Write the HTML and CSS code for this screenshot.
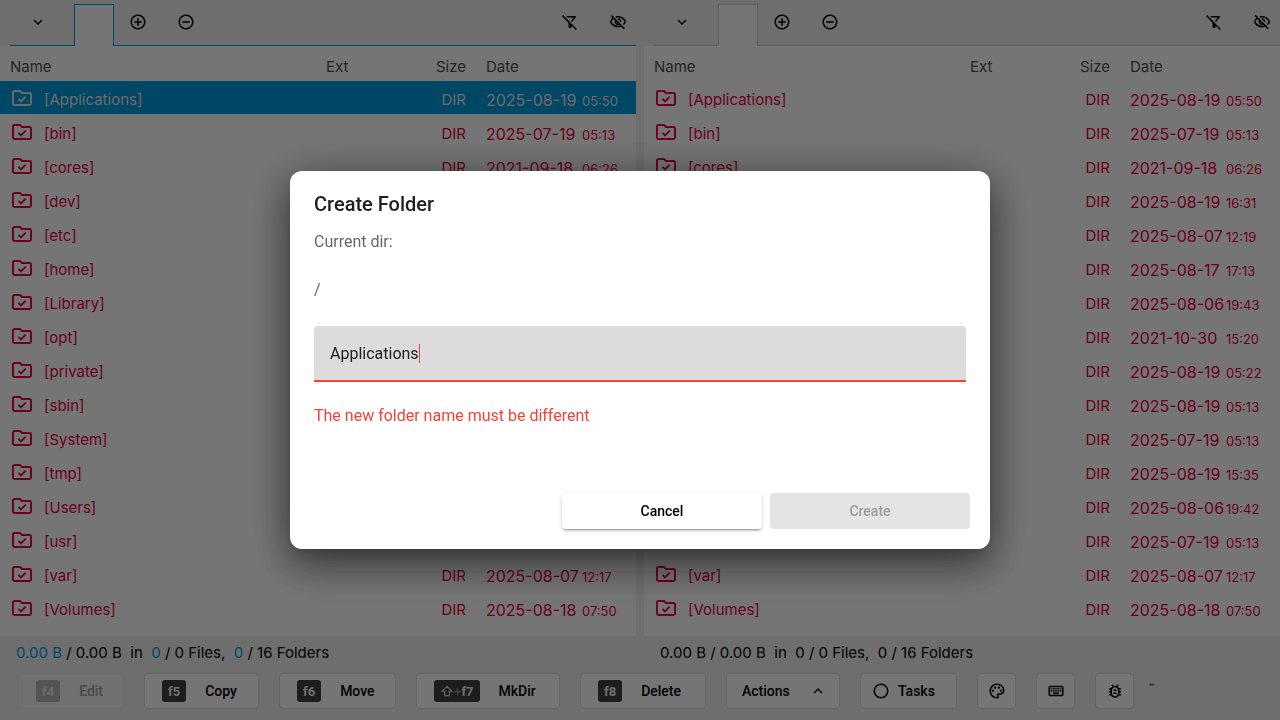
FILE: index.html
```html
<!DOCTYPE html>
<html lang="en">
<head>
<meta charset="utf-8">
<title>File Commander</title>
<link rel="stylesheet" href="styles.css">
</head>
<body>
<svg class="sprite" aria-hidden="true">
  <symbol id="i-down" viewBox="0 0 24 24"><path d="M7.41 8.59 12 13.17l4.59-4.58L18 10l-6 6-6-6z"/></symbol>
  <symbol id="i-up" viewBox="0 0 24 24"><path d="M7.41 15.41 12 10.83l4.59 4.58L18 14l-6-6-6 6z"/></symbol>
  <symbol id="i-plus" viewBox="0 0 24 24"><path d="M13 7h-2v4H7v2h4v4h2v-4h4v-2h-4V7zm-1-5C6.48 2 2 6.48 2 12s4.48 10 10 10 10-4.48 10-10S17.520 2 12 2zm0 18c-4.410 0-8-3.590-8-8s3.590-8 8-8 8 3.590 8 8-3.590 8-8 8z"/></symbol>
  <symbol id="i-minus" viewBox="0 0 24 24"><path d="M7 11v2h10v-2H7zm5-9C6.480 2 2 6.480 2 12s4.480 10 10 10 10-4.480 10-10S17.520 2 12 2zm0 18c-4.410 0-8-3.590-8-8s3.590-8 8-8 8 3.590 8 8-3.590 8-8 8z"/></symbol>
  <symbol id="i-filter" viewBox="0 0 24 24"><path d="m16.950 6-3.570 4.550 1.430 1.430c1.030-1.310 4.980-6.370 4.980-6.370A.998.998 0 0 0 19 4H6.830l2 2h8.120zM2.810 2.810 1.390 4.220 10 13v6c0 .55.450 1 1 1h2c.55 0 1-.45 1-1v-2.170l5.780 5.780 1.410-1.410L2.810 2.810z"/></symbol>
  <symbol id="i-eye" viewBox="0 0 24 24"><path d="M12 6c3.790 0 7.170 2.130 8.820 5.500-.59 1.220-1.420 2.270-2.410 3.120l1.410 1.410c1.390-1.230 2.490-2.770 3.180-4.530C21.270 7.110 17 4 12 4c-1.270 0-2.490.2-3.640.57l1.650 1.650C10.660 6.090 11.320 6 12 6zm-1.070 1.140L13 9.210c.57.25 1.030.71 1.280 1.280l2.070 2.070c.08-.34.14-.7.14-1.070C16.500 9.010 14.480 7 12 7c-.37 0-.72.05-1.070.14zM2.010 3.870l2.680 2.680A11.738 11.738 0 0 0 1 11.500C2.730 15.890 7 19 12 19c1.520 0 2.980-.29 4.320-.82l3.420 3.420 1.410-1.410L3.420 2.450 2.010 3.870zm7.500 7.500 2.610 2.610c-.04.01-.08.02-.12.02a2.500 2.500 0 0 1-2.500-2.500c0-.05.010-.08.010-.13zm-3.400-3.400 1.750 1.750a4.600 4.600 0 0 0-.36 1.780 4.507 4.507 0 0 0 6.270 4.140l.98.98c-.88.24-1.800.38-2.750.38-3.790 0-7.170-2.130-8.820-5.500.7-1.430 1.720-2.610 2.930-3.530z"/></symbol>
  <symbol id="i-folder" viewBox="0 0 24 24"><path d="M3 6.500V17.500A1.500 1.500 0 0 0 4.500 19H19.500A1.500 1.500 0 0 0 21 17.500V8.500A1.500 1.500 0 0 0 19.500 7H12L10 5H4.500A1.500 1.500 0 0 0 3 6.500ZM8.500 12.800l2.500 2.500 4.700-4.700" fill="none" stroke="currentColor" stroke-width="1.900"/></symbol>
  <symbol id="i-shift" viewBox="0 0 24 24"><path d="M12 4 3.500 12.500H8V20h8v-7.500h4.500z" fill="none" stroke="currentColor" stroke-width="2"/></symbol>
  <symbol id="i-circle" viewBox="0 0 24 24"><circle cx="12" cy="12" r="9" fill="none" stroke="currentColor" stroke-width="2"/></symbol>
  <symbol id="i-palette" viewBox="0 0 24 24"><path d="M12 22C6.490 22 2 17.510 2 12S6.490 2 12 2s10 4.040 10 9c0 3.310-2.690 6-6 6h-1.770c-.28 0-.5.22-.5.500 0 .12.050.23.130.33.41.47.640 1.060.640 1.670A2.500 2.500 0 0 1 12 22zm0-18c-4.410 0-8 3.590-8 8s3.590 8 8 8c.28 0 .5-.22.500-.5a.54.540 0 0 0-.14-.35c-.41-.46-.63-1.050-.63-1.650a2.500 2.500 0 0 1 2.500-2.500H16c2.210 0 4-1.790 4-4 0-3.860-3.590-7-8-7z"/><circle cx="6.500" cy="11.500" r="1.500"/><circle cx="9.500" cy="7.500" r="1.500"/><circle cx="14.500" cy="7.500" r="1.500"/><circle cx="17.500" cy="11.500" r="1.500"/></symbol>
  <symbol id="i-keyboard" viewBox="0 0 24 24"><path d="M4 5h16a2 2 0 0 1 2 2v10a2 2 0 0 1-2 2H4a2 2 0 0 1-2-2V7a2 2 0 0 1 2-2zm0 2v10h16V7zm7 1h2v2h-2zm0 3h2v2h-2zM8 8h2v2H8zm0 3h2v2H8zm-3 0h2v2H5zm0-3h2v2H5zm3 6h8v2H8zm6-3h2v2h-2zm0-3h2v2h-2zm3 3h2v2h-2zm0-3h2v2h-2z" fill-rule="evenodd"/></symbol>
  <symbol id="i-bug" viewBox="0 0 24 24"><path d="M20 8h-2.810a5.985 5.985 0 0 0-1.820-1.960L17 4.410 15.590 3l-2.170 2.170a6.002 6.002 0 0 0-2.830 0L8.410 3 7 4.410l1.620 1.630C7.880 6.550 7.260 7.220 6.810 8H4v2h2.090c-.05.33-.09.66-.09 1v1H4v2h2v1c0 .34.040.67.090 1H4v2h2.810c1.040 1.790 2.970 3 5.190 3s4.150-1.210 5.190-3H20v-2h-2.090c.05-.33.090-.66.090-1v-1h2v-2h-2v-1c0-.34-.04-.67-.09-1H20V8zm-4 7c0 2.210-1.790 4-4 4s-4-1.790-4-4v-4c0-2.210 1.790-4 4-4s4 1.790 4 4v4zm-6-1h4v2h-4zm0-4h4v2h-4z"/></symbol>
</svg>

<div class="app">
  <main class="panels">
    <section class="panel panel-active" aria-label="Left panel">
      <div class="toolbar">
        <div class="tool-lead"><button class="tool" aria-label="Volumes"><svg class="icon"><use href="#i-down"/></svg></button></div>
        <button class="tab" aria-label="Current tab"></button>
        <div class="tool-rest">
          <button class="tool" aria-label="Add tab"><svg class="icon"><use href="#i-plus"/></svg></button>
          <button class="tool" aria-label="Remove tab"><svg class="icon"><use href="#i-minus"/></svg></button>
          <span class="spacer"></span>
          <button class="tool" aria-label="Clear filter"><svg class="icon"><use href="#i-filter"/></svg></button>
          <button class="tool" aria-label="Hidden files"><svg class="icon"><use href="#i-eye"/></svg></button>
        </div>
      </div>
      <div class="list">
        <table class="files">
          <thead><tr><th class="c-name">Name</th><th class="c-ext">Ext</th><th class="c-size">Size</th><th class="c-date">Date</th></tr></thead>
          <tbody></tbody>
        </table>
      </div>
      <p class="status"><span class="mark">0.00 B</span> / 0.00 B&nbsp; in&nbsp; <span class="mark">0</span> / 0 Files,&nbsp; <span class="mark">0</span> / 16 Folders</p>
    </section>
    <section class="panel" aria-label="Right panel">
      <div class="toolbar">
        <div class="tool-lead"><button class="tool" aria-label="Volumes"><svg class="icon"><use href="#i-down"/></svg></button></div>
        <button class="tab" aria-label="Current tab"></button>
        <div class="tool-rest">
          <button class="tool" aria-label="Add tab"><svg class="icon"><use href="#i-plus"/></svg></button>
          <button class="tool" aria-label="Remove tab"><svg class="icon"><use href="#i-minus"/></svg></button>
          <span class="spacer"></span>
          <button class="tool" aria-label="Clear filter"><svg class="icon"><use href="#i-filter"/></svg></button>
          <button class="tool" aria-label="Hidden files"><svg class="icon"><use href="#i-eye"/></svg></button>
        </div>
      </div>
      <div class="list">
        <table class="files">
          <thead><tr><th class="c-name">Name</th><th class="c-ext">Ext</th><th class="c-size">Size</th><th class="c-date">Date</th></tr></thead>
          <tbody></tbody>
        </table>
      </div>
      <p class="status"><span class="mark">0.00 B</span> / 0.00 B&nbsp; in&nbsp; <span class="mark">0</span> / 0 Files,&nbsp; <span class="mark">0</span> / 16 Folders</p>
    </section>
  </main>
  <footer class="actions">
    <button class="btn w-edit" disabled><kbd>f4</kbd>Edit</button>
    <button class="btn w-copy"><kbd>f5</kbd>Copy</button>
    <button class="btn w-move"><kbd>f6</kbd>Move</button>
    <button class="btn w-mkdir"><kbd><svg class="shift"><use href="#i-shift"/></svg><span class="plus">+</span>f7</kbd>MkDir</button>
    <button class="btn w-delete"><kbd>f8</kbd>Delete</button>
    <button class="btn btn-menu w-actions">Actions<svg class="icon"><use href="#i-up"/></svg></button>
    <button class="btn btn-tasks w-tasks"><svg class="icon"><use href="#i-circle"/></svg>Tasks</button>
    <button class="btn btn-icon" aria-label="Theme"><svg class="icon"><use href="#i-palette"/></svg></button>
    <button class="btn btn-icon" aria-label="Shortcuts"><svg class="icon"><use href="#i-keyboard"/></svg></button>
    <div class="about">
      <button class="btn btn-icon" aria-label="Report a bug"><svg class="icon"><use href="#i-bug"/></svg></button>
      <a class="version" href="#">-</a>
    </div>
  </footer>
</div>

<div class="scrim">
  <form class="dialog" role="dialog" aria-modal="true" aria-labelledby="dialog-title">
    <h2 class="dialog-title" id="dialog-title">Create Folder</h2>
    <div class="dialog-body">
      <label class="dialog-label" for="folder">Current dir:</label>
      <p class="dialog-path">/</p>
      <div class="field"><input class="field-input" id="folder" type="text" value="Applications" aria-invalid="true" aria-describedby="folder-error"><span class="caret"></span></div>
      <p class="error" id="folder-error">The new folder name must be different</p>
    </div>
    <div class="dialog-actions">
      <button class="dialog-btn" type="button">Cancel</button>
      <button class="dialog-btn" type="submit" disabled>Create</button>
    </div>
  </form>
</div>
<script src="app.js"></script>
</body>
</html>
```
FILE: styles.css
```css
* { box-sizing: border-box; }

body {
  margin: 0;
  font-family: Inter, "Liberation Sans", sans-serif;
  font-size: 15px;
  color: #000;
  background: #f0f0f0;
}

button { font: inherit; color: inherit; margin: 0; }
svg { fill: currentColor; flex: none; }
.sprite { position: absolute; width: 0; height: 0; }
.icon { width: 18px; height: 18px; display: block; }

.app { display: flex; flex-direction: column; min-height: 100vh; }
.panels { flex: 1; display: grid; grid-template-columns: 1fr 1fr; gap: 8px; }
.panel { --line: #d0d0d0; display: flex; flex-direction: column; min-width: 0; }
.panel-active { --line: #00a0e8; }

.toolbar { display: flex; height: 46px; padding: 4px 0 0 10px; }
.tool-lead, .tool-rest { display: flex; align-items: center; border-bottom: 1px solid var(--line); padding-bottom: 5px; }
.tool-lead { width: 64px; padding-left: 10px; }
.tool-rest { flex: 1; gap: 12px; padding-left: 6px; }
.spacer { flex: 1; }
.tool { width: 36px; height: 36px; padding: 0; border: 0; background: none; display: flex; align-items: center; justify-content: center; }
.tab { width: 40px; padding: 0; border: 1px solid var(--line); border-bottom: 0; background: #fff; }

.list { flex: 1; background: #fff; }
.files { width: 100%; table-layout: fixed; border-collapse: separate; border-spacing: 0; }
.files th { height: 35px; padding: 5px 10px 0; font-weight: 400; text-align: left; color: #505050; }
.files td { height: 34px; padding: 4px 10px 0; color: #e80040; white-space: nowrap; border-bottom: 1px solid #fff; }
.files .c-ext { width: 70px; }
.files .c-size { width: 90px; text-align: right; }
.files .c-date { width: 160px; }
.files tr.selected td { background: #0098dc; color: #e8e8e8; }
.entry { display: flex; align-items: center; gap: 10px; }
.folder { width: 24px; height: 24px; margin-bottom: 4px; }
.stamp { display: flex; align-items: baseline; }
.day { width: 96px; font-size: 16px; }
.time { font-size: 13px; }

.status { margin: 0; padding: 0 16px; line-height: 34px; white-space: pre-wrap; }
.panel-active .mark { color: #00a0e8; }

.actions { display: flex; align-items: flex-start; gap: 20px; padding: 3px 18px 11px; font-family: Roboto, sans-serif; font-size: 14px; font-weight: 500; }
.btn { display: flex; align-items: center; gap: 19px; height: 36px; padding: 0 17px; border: 1px solid #dcdcdc; border-radius: 4px; background: #fff; white-space: nowrap; }
.btn:disabled { color: #a0a0a0; background: #f4f4f4; border-color: #e8e8e8; }
.btn kbd { display: flex; align-items: center; height: 22px; padding: 0 6px; border-radius: 3px; background: #404040; color: #f0f0f0; font: 700 13px Roboto, sans-serif; }
.btn:disabled kbd { background: #b8b8b8; color: #e8e8e8; }
.shift { width: 14px; height: 14px; color: #d0d0d0; }
.plus { font-weight: 400; color: #909090; }
.w-edit { width: 106px; }
.w-copy { width: 115px; }
.w-move { width: 117px; }
.w-mkdir { width: 144px; }
.w-delete { width: 126px; }
.w-actions { width: 114px; }
.w-tasks { width: 97px; }
.btn-menu { padding: 0 15px; justify-content: space-between; }
.btn-tasks { padding: 0 11px; gap: 8px; }
.btn-icon { width: 39px; padding: 0; justify-content: center; }
.about { display: flex; gap: 15px; }
.version { font: 16px/22px "Liberation Serif", serif; text-decoration: none; color: #0000ee; }

.scrim { position: fixed; inset: 0; display: flex; align-items: center; justify-content: center; background: rgba(0, 0, 0, .54); }
.dialog {
  width: 700px; max-width: 100%; border-radius: 12px; background: #fff; color: #666;
  font: 16px/24px Roboto, sans-serif;
  box-shadow: 0 11px 15px -7px rgba(0, 0, 0, .2), 0 24px 38px 3px rgba(0, 0, 0, .14), 0 9px 46px 8px rgba(0, 0, 0, .12), 0 8px 40px rgba(0, 0, 0, .4);
}
.dialog-title { margin: 0; padding: 17px 24px 10px; font-size: 20px; line-height: 32px; font-weight: 500; color: #202020; }
.dialog-body { padding: 0 24px; }
.dialog-label { display: block; }
.dialog-path { margin: 24px 0; }
.field { position: relative; }
.field-input { display: block; width: 100%; height: 56px; padding: 0 16px; border: 0; border-bottom: 2px solid #f44336; border-radius: 4px 4px 0 0; background: #dcdcdc; color: #202020; font: inherit; outline: 0; caret-color: #f44336; }
.caret { position: absolute; left: 105px; top: 18px; width: 1px; height: 19px; background: #f44336; }
.error { margin: 22px 0 0; color: #f44336; }
.dialog-actions { display: flex; justify-content: flex-end; gap: 8px; padding: 65px 20px 20px; }
.dialog-btn { width: 200px; height: 36px; border: 0; border-radius: 4px; background: #fff; color: #000; font-size: 14px; font-weight: 500; box-shadow: 0 3px 1px -2px rgba(0, 0, 0, .2), 0 2px 2px rgba(0, 0, 0, .14), 0 1px 5px rgba(0, 0, 0, .12); }
.dialog-btn:disabled { background: #e4e4e4; color: #9c9c9c; box-shadow: none; }
```
FILE: app.js
```js
const entries = [
  ["Applications", "2025-08-19", "05:50"],
  ["bin", "2025-07-19", "05:13"],
  ["cores", "2021-09-18", "06:26"],
  ["dev", "2025-08-19", "16:31"],
  ["etc", "2025-08-07", "12:19"],
  ["home", "2025-08-17", "17:13"],
  ["Library", "2025-08-06", "19:43"],
  ["opt", "2021-10-30", "15:20"],
  ["private", "2025-08-19", "05:22"],
  ["sbin", "2025-08-19", "05:13"],
  ["System", "2025-07-19", "05:13"],
  ["tmp", "2025-08-19", "15:35"],
  ["Users", "2025-08-06", "19:42"],
  ["usr", "2025-07-19", "05:13"],
  ["var", "2025-08-07", "12:17"],
  ["Volumes", "2025-08-18", "07:50"]
];

document.querySelectorAll(".panel").forEach((panel) => {
  const active = panel.classList.contains("panel-active");
  panel.querySelector("tbody").innerHTML = entries.map(([name, day, time], i) => `
    <tr${active && i === 0 ? ' class="selected"' : ""}>
      <td><div class="entry"><svg class="folder"><use href="#i-folder"/></svg>[${name}]</div></td>
      <td></td>
      <td class="c-size">DIR</td>
      <td><div class="stamp"><span class="day">${day}</span><span class="time">${time}</span></div></td>
    </tr>`).join("");
});
```
